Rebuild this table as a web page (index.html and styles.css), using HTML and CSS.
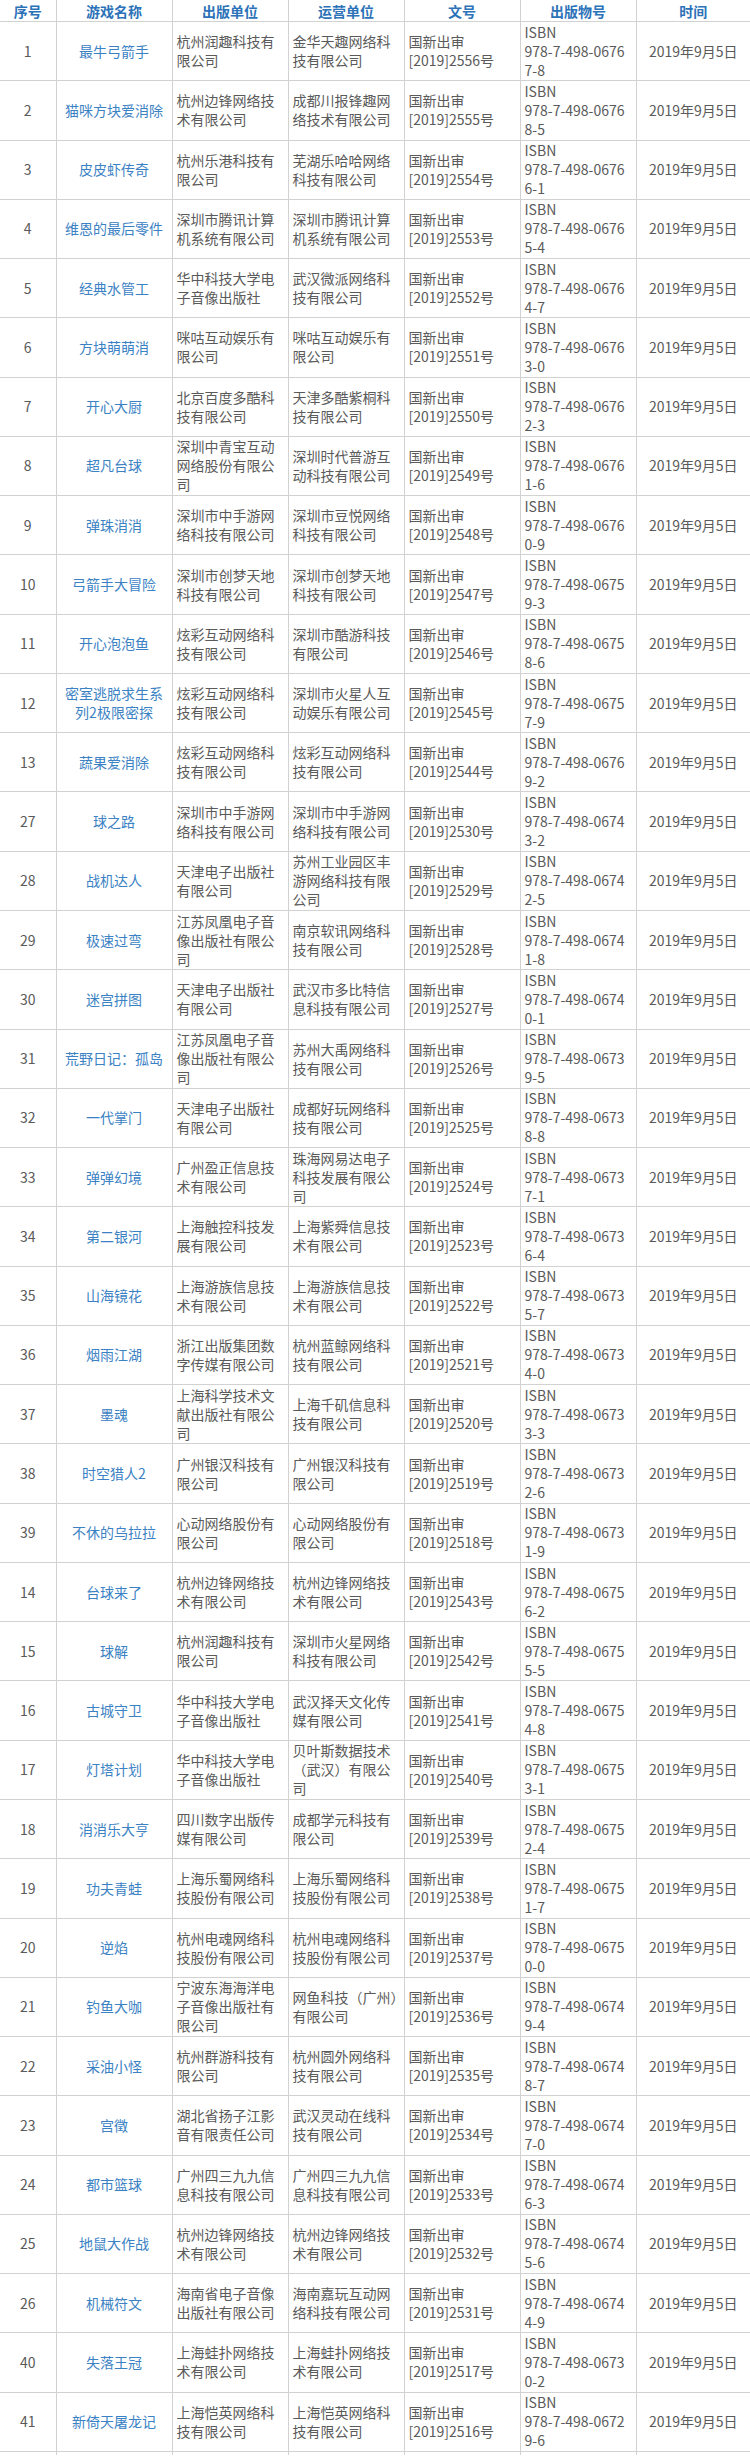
FILE: index.html
```html
<!DOCTYPE html>
<html lang="zh-CN">
<head>
<meta charset="utf-8">
<title>游戏审批列表</title>
<link rel="stylesheet" href="styles.css">
</head>
<body>
<table class="list">
<colgroup>
<col class="c-no"><col class="c-name"><col class="c-pub"><col class="c-op"><col class="c-doc"><col class="c-isbn"><col class="c-date">
</colgroup>
<thead>
<tr class="head"><th>序号</th><th>游戏名称</th><th>出版单位</th><th>运营单位</th><th>文号</th><th>出版物号</th><th>时间</th></tr>
</thead>
<tbody>
<tr><td class="no">1</td><td class="name">最牛弓箭手</td><td class="txt">杭州润趣科技有限公司</td><td class="txt">金华天趣网络科技有限公司</td><td class="txt">国新出审<br>[2019]2556号</td><td class="txt isbn">ISBN<br>978-7-498-0676<br>7-8</td><td class="date">2019年9月5日</td></tr>
<tr><td class="no">2</td><td class="name">猫咪方块爱消除</td><td class="txt">杭州边锋网络技术有限公司</td><td class="txt">成都川报锋趣网络技术有限公司</td><td class="txt">国新出审<br>[2019]2555号</td><td class="txt isbn">ISBN<br>978-7-498-0676<br>8-5</td><td class="date">2019年9月5日</td></tr>
<tr><td class="no">3</td><td class="name">皮皮虾传奇</td><td class="txt">杭州乐港科技有限公司</td><td class="txt">芜湖乐哈哈网络科技有限公司</td><td class="txt">国新出审<br>[2019]2554号</td><td class="txt isbn">ISBN<br>978-7-498-0676<br>6-1</td><td class="date">2019年9月5日</td></tr>
<tr><td class="no">4</td><td class="name">维恩的最后零件</td><td class="txt">深圳市腾讯计算机系统有限公司</td><td class="txt">深圳市腾讯计算机系统有限公司</td><td class="txt">国新出审<br>[2019]2553号</td><td class="txt isbn">ISBN<br>978-7-498-0676<br>5-4</td><td class="date">2019年9月5日</td></tr>
<tr><td class="no">5</td><td class="name">经典水管工</td><td class="txt">华中科技大学电子音像出版社</td><td class="txt">武汉微派网络科技有限公司</td><td class="txt">国新出审<br>[2019]2552号</td><td class="txt isbn">ISBN<br>978-7-498-0676<br>4-7</td><td class="date">2019年9月5日</td></tr>
<tr><td class="no">6</td><td class="name">方块萌萌消</td><td class="txt">咪咕互动娱乐有限公司</td><td class="txt">咪咕互动娱乐有限公司</td><td class="txt">国新出审<br>[2019]2551号</td><td class="txt isbn">ISBN<br>978-7-498-0676<br>3-0</td><td class="date">2019年9月5日</td></tr>
<tr><td class="no">7</td><td class="name">开心大厨</td><td class="txt">北京百度多酷科技有限公司</td><td class="txt">天津多酷紫桐科技有限公司</td><td class="txt">国新出审<br>[2019]2550号</td><td class="txt isbn">ISBN<br>978-7-498-0676<br>2-3</td><td class="date">2019年9月5日</td></tr>
<tr><td class="no">8</td><td class="name">超凡台球</td><td class="txt">深圳中青宝互动网络股份有限公司</td><td class="txt">深圳时代普游互动科技有限公司</td><td class="txt">国新出审<br>[2019]2549号</td><td class="txt isbn">ISBN<br>978-7-498-0676<br>1-6</td><td class="date">2019年9月5日</td></tr>
<tr><td class="no">9</td><td class="name">弹珠消消</td><td class="txt">深圳市中手游网络科技有限公司</td><td class="txt">深圳市豆悦网络科技有限公司</td><td class="txt">国新出审<br>[2019]2548号</td><td class="txt isbn">ISBN<br>978-7-498-0676<br>0-9</td><td class="date">2019年9月5日</td></tr>
<tr><td class="no">10</td><td class="name">弓箭手大冒险</td><td class="txt">深圳市创梦天地科技有限公司</td><td class="txt">深圳市创梦天地科技有限公司</td><td class="txt">国新出审<br>[2019]2547号</td><td class="txt isbn">ISBN<br>978-7-498-0675<br>9-3</td><td class="date">2019年9月5日</td></tr>
<tr><td class="no">11</td><td class="name">开心泡泡鱼</td><td class="txt">炫彩互动网络科技有限公司</td><td class="txt">深圳市酷游科技有限公司</td><td class="txt">国新出审<br>[2019]2546号</td><td class="txt isbn">ISBN<br>978-7-498-0675<br>8-6</td><td class="date">2019年9月5日</td></tr>
<tr><td class="no">12</td><td class="name">密室逃脱求生系列2极限密探</td><td class="txt">炫彩互动网络科技有限公司</td><td class="txt">深圳市火星人互动娱乐有限公司</td><td class="txt">国新出审<br>[2019]2545号</td><td class="txt isbn">ISBN<br>978-7-498-0675<br>7-9</td><td class="date">2019年9月5日</td></tr>
<tr><td class="no">13</td><td class="name">蔬果爱消除</td><td class="txt">炫彩互动网络科技有限公司</td><td class="txt">炫彩互动网络科技有限公司</td><td class="txt">国新出审<br>[2019]2544号</td><td class="txt isbn">ISBN<br>978-7-498-0676<br>9-2</td><td class="date">2019年9月5日</td></tr>
<tr><td class="no">27</td><td class="name">球之路</td><td class="txt">深圳市中手游网络科技有限公司</td><td class="txt">深圳市中手游网络科技有限公司</td><td class="txt">国新出审<br>[2019]2530号</td><td class="txt isbn">ISBN<br>978-7-498-0674<br>3-2</td><td class="date">2019年9月5日</td></tr>
<tr><td class="no">28</td><td class="name">战机达人</td><td class="txt">天津电子出版社有限公司</td><td class="txt">苏州工业园区丰游网络科技有限公司</td><td class="txt">国新出审<br>[2019]2529号</td><td class="txt isbn">ISBN<br>978-7-498-0674<br>2-5</td><td class="date">2019年9月5日</td></tr>
<tr><td class="no">29</td><td class="name">极速过弯</td><td class="txt">江苏凤凰电子音像出版社有限公司</td><td class="txt">南京软讯网络科技有限公司</td><td class="txt">国新出审<br>[2019]2528号</td><td class="txt isbn">ISBN<br>978-7-498-0674<br>1-8</td><td class="date">2019年9月5日</td></tr>
<tr><td class="no">30</td><td class="name">迷宫拼图</td><td class="txt">天津电子出版社有限公司</td><td class="txt">武汉市多比特信息科技有限公司</td><td class="txt">国新出审<br>[2019]2527号</td><td class="txt isbn">ISBN<br>978-7-498-0674<br>0-1</td><td class="date">2019年9月5日</td></tr>
<tr><td class="no">31</td><td class="name">荒野日记：孤岛</td><td class="txt">江苏凤凰电子音像出版社有限公司</td><td class="txt">苏州大禹网络科技有限公司</td><td class="txt">国新出审<br>[2019]2526号</td><td class="txt isbn">ISBN<br>978-7-498-0673<br>9-5</td><td class="date">2019年9月5日</td></tr>
<tr><td class="no">32</td><td class="name">一代掌门</td><td class="txt">天津电子出版社有限公司</td><td class="txt">成都好玩网络科技有限公司</td><td class="txt">国新出审<br>[2019]2525号</td><td class="txt isbn">ISBN<br>978-7-498-0673<br>8-8</td><td class="date">2019年9月5日</td></tr>
<tr><td class="no">33</td><td class="name">弹弹幻境</td><td class="txt">广州盈正信息技术有限公司</td><td class="txt">珠海网易达电子科技发展有限公司</td><td class="txt">国新出审<br>[2019]2524号</td><td class="txt isbn">ISBN<br>978-7-498-0673<br>7-1</td><td class="date">2019年9月5日</td></tr>
<tr><td class="no">34</td><td class="name">第二银河</td><td class="txt">上海触控科技发展有限公司</td><td class="txt">上海紫舜信息技术有限公司</td><td class="txt">国新出审<br>[2019]2523号</td><td class="txt isbn">ISBN<br>978-7-498-0673<br>6-4</td><td class="date">2019年9月5日</td></tr>
<tr><td class="no">35</td><td class="name">山海镜花</td><td class="txt">上海游族信息技术有限公司</td><td class="txt">上海游族信息技术有限公司</td><td class="txt">国新出审<br>[2019]2522号</td><td class="txt isbn">ISBN<br>978-7-498-0673<br>5-7</td><td class="date">2019年9月5日</td></tr>
<tr><td class="no">36</td><td class="name">烟雨江湖</td><td class="txt">浙江出版集团数字传媒有限公司</td><td class="txt">杭州蓝鲸网络科技有限公司</td><td class="txt">国新出审<br>[2019]2521号</td><td class="txt isbn">ISBN<br>978-7-498-0673<br>4-0</td><td class="date">2019年9月5日</td></tr>
<tr><td class="no">37</td><td class="name">墨魂</td><td class="txt">上海科学技术文献出版社有限公司</td><td class="txt">上海千矶信息科技有限公司</td><td class="txt">国新出审<br>[2019]2520号</td><td class="txt isbn">ISBN<br>978-7-498-0673<br>3-3</td><td class="date">2019年9月5日</td></tr>
<tr><td class="no">38</td><td class="name">时空猎人2</td><td class="txt">广州银汉科技有限公司</td><td class="txt">广州银汉科技有限公司</td><td class="txt">国新出审<br>[2019]2519号</td><td class="txt isbn">ISBN<br>978-7-498-0673<br>2-6</td><td class="date">2019年9月5日</td></tr>
<tr><td class="no">39</td><td class="name">不休的乌拉拉</td><td class="txt">心动网络股份有限公司</td><td class="txt">心动网络股份有限公司</td><td class="txt">国新出审<br>[2019]2518号</td><td class="txt isbn">ISBN<br>978-7-498-0673<br>1-9</td><td class="date">2019年9月5日</td></tr>
<tr><td class="no">14</td><td class="name">台球来了</td><td class="txt">杭州边锋网络技术有限公司</td><td class="txt">杭州边锋网络技术有限公司</td><td class="txt">国新出审<br>[2019]2543号</td><td class="txt isbn">ISBN<br>978-7-498-0675<br>6-2</td><td class="date">2019年9月5日</td></tr>
<tr><td class="no">15</td><td class="name">球解</td><td class="txt">杭州润趣科技有限公司</td><td class="txt">深圳市火星网络科技有限公司</td><td class="txt">国新出审<br>[2019]2542号</td><td class="txt isbn">ISBN<br>978-7-498-0675<br>5-5</td><td class="date">2019年9月5日</td></tr>
<tr><td class="no">16</td><td class="name">古城守卫</td><td class="txt">华中科技大学电子音像出版社</td><td class="txt">武汉择天文化传媒有限公司</td><td class="txt">国新出审<br>[2019]2541号</td><td class="txt isbn">ISBN<br>978-7-498-0675<br>4-8</td><td class="date">2019年9月5日</td></tr>
<tr><td class="no">17</td><td class="name">灯塔计划</td><td class="txt">华中科技大学电子音像出版社</td><td class="txt">贝叶斯数据技术（武汉）有限公司</td><td class="txt">国新出审<br>[2019]2540号</td><td class="txt isbn">ISBN<br>978-7-498-0675<br>3-1</td><td class="date">2019年9月5日</td></tr>
<tr><td class="no">18</td><td class="name">消消乐大亨</td><td class="txt">四川数字出版传媒有限公司</td><td class="txt">成都学元科技有限公司</td><td class="txt">国新出审<br>[2019]2539号</td><td class="txt isbn">ISBN<br>978-7-498-0675<br>2-4</td><td class="date">2019年9月5日</td></tr>
<tr><td class="no">19</td><td class="name">功夫青蛙</td><td class="txt">上海乐蜀网络科技股份有限公司</td><td class="txt">上海乐蜀网络科技股份有限公司</td><td class="txt">国新出审<br>[2019]2538号</td><td class="txt isbn">ISBN<br>978-7-498-0675<br>1-7</td><td class="date">2019年9月5日</td></tr>
<tr><td class="no">20</td><td class="name">逆焰</td><td class="txt">杭州电魂网络科技股份有限公司</td><td class="txt">杭州电魂网络科技股份有限公司</td><td class="txt">国新出审<br>[2019]2537号</td><td class="txt isbn">ISBN<br>978-7-498-0675<br>0-0</td><td class="date">2019年9月5日</td></tr>
<tr><td class="no">21</td><td class="name">钓鱼大咖</td><td class="txt">宁波东海海洋电子音像出版社有限公司</td><td class="txt">网鱼科技（广州）有限公司</td><td class="txt">国新出审<br>[2019]2536号</td><td class="txt isbn">ISBN<br>978-7-498-0674<br>9-4</td><td class="date">2019年9月5日</td></tr>
<tr><td class="no">22</td><td class="name">采油小怪</td><td class="txt">杭州群游科技有限公司</td><td class="txt">杭州圆外网络科技有限公司</td><td class="txt">国新出审<br>[2019]2535号</td><td class="txt isbn">ISBN<br>978-7-498-0674<br>8-7</td><td class="date">2019年9月5日</td></tr>
<tr><td class="no">23</td><td class="name">宫徵</td><td class="txt">湖北省扬子江影音有限责任公司</td><td class="txt">武汉灵动在线科技有限公司</td><td class="txt">国新出审<br>[2019]2534号</td><td class="txt isbn">ISBN<br>978-7-498-0674<br>7-0</td><td class="date">2019年9月5日</td></tr>
<tr><td class="no">24</td><td class="name">都市篮球</td><td class="txt">广州四三九九信息科技有限公司</td><td class="txt">广州四三九九信息科技有限公司</td><td class="txt">国新出审<br>[2019]2533号</td><td class="txt isbn">ISBN<br>978-7-498-0674<br>6-3</td><td class="date">2019年9月5日</td></tr>
<tr><td class="no">25</td><td class="name">地鼠大作战</td><td class="txt">杭州边锋网络技术有限公司</td><td class="txt">杭州边锋网络技术有限公司</td><td class="txt">国新出审<br>[2019]2532号</td><td class="txt isbn">ISBN<br>978-7-498-0674<br>5-6</td><td class="date">2019年9月5日</td></tr>
<tr><td class="no">26</td><td class="name">机械符文</td><td class="txt">海南省电子音像出版社有限公司</td><td class="txt">海南嘉玩互动网络科技有限公司</td><td class="txt">国新出审<br>[2019]2531号</td><td class="txt isbn">ISBN<br>978-7-498-0674<br>4-9</td><td class="date">2019年9月5日</td></tr>
<tr><td class="no">40</td><td class="name">失落王冠</td><td class="txt">上海蛙扑网络技术有限公司</td><td class="txt">上海蛙扑网络技术有限公司</td><td class="txt">国新出审<br>[2019]2517号</td><td class="txt isbn">ISBN<br>978-7-498-0673<br>0-2</td><td class="date">2019年9月5日</td></tr>
<tr><td class="no">41</td><td class="name">新倚天屠龙记</td><td class="txt">上海恺英网络科技有限公司</td><td class="txt">上海恺英网络科技有限公司</td><td class="txt">国新出审<br>[2019]2516号</td><td class="txt isbn">ISBN<br>978-7-498-0672<br>9-6</td><td class="date">2019年9月5日</td></tr>
<tr class="tail"><td></td><td></td><td></td><td></td><td></td><td></td><td></td></tr>
</tbody>
</table>
</body>
</html>
```
FILE: styles.css
```css
html, body {
  margin: 0;
  padding: 0;
  background: #ffffff;
}

body {
  font-family: "Noto Sans CJK SC", "Noto Sans", sans-serif;
  font-size: 14px;
  color: #5a5a5a;
}

.list {
  width: 750px;
  table-layout: fixed;
  border-collapse: collapse;
  border-spacing: 0;
}

.c-no { width: 56px; }
.c-name { width: 116px; }
.c-pub { width: 116px; }
.c-op { width: 116px; }
.c-doc { width: 116px; }
.c-isbn { width: 116px; }
.c-date { width: 114px; }

.list th,
.list td {
  border: 1px solid #d2d2d2;
  padding: 0 4px;
  vertical-align: middle;
  line-height: 19px;
  overflow: hidden;
}

.list tr > :first-child { border-left: none; }
.list tr > :last-child { border-right: none; }
.list thead th { border-top: none; }

.head th {
  height: 21px;
  font-size: 14px;
  font-weight: bold;
  color: #2c72b8;
  text-align: center;
  line-height: 20px;
  padding: 0;
}

.list tbody tr {
  height: 59.27px;
}

.no {
  text-align: center;
  font-size: 14px;
}

.name {
  text-align: center;
  color: #3b82c4;
}

.txt {
  text-align: left;
}

.isbn {
  white-space: nowrap;
  padding-left: 4px;
}

.date {
  text-align: center;
  white-space: nowrap;
}

.list tbody tr.tail {
  height: 4px;
}

.tail td {
  border-bottom: none;
  padding: 0;
  line-height: 0;
}
```
